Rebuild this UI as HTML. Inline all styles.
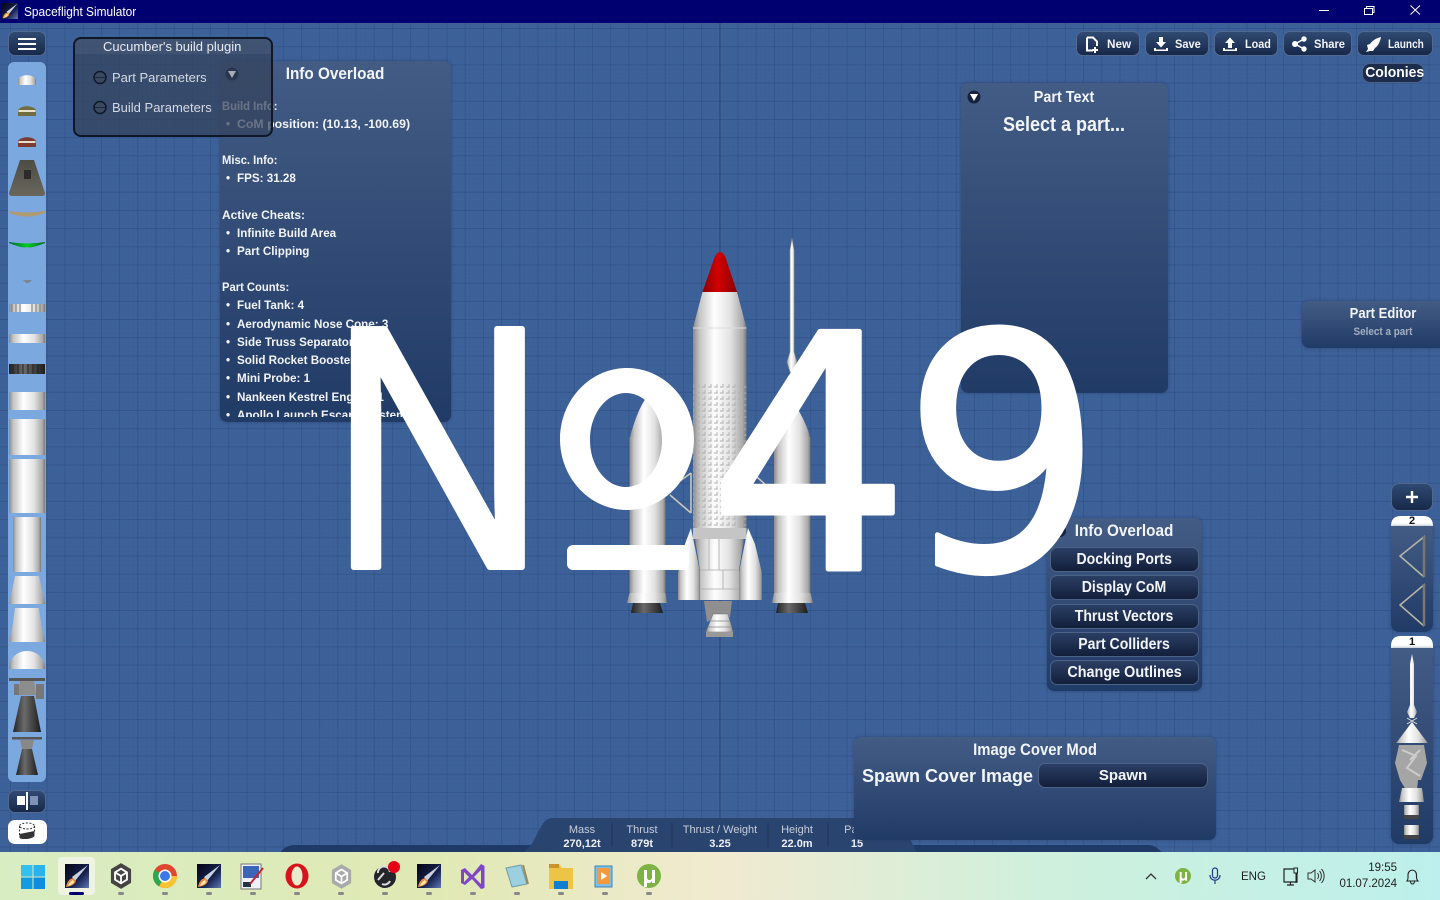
<!DOCTYPE html>
<html><head><meta charset="utf-8"><title>Spaceflight Simulator</title>
<style>
html,body{margin:0;padding:0;width:1440px;height:900px;overflow:hidden;background:#3d6199}
body{position:relative;font-family:"Liberation Sans",sans-serif;color:#fff}
#bg{position:absolute;left:0;top:23px;width:1440px;height:830px;background-color:#3d6199;
background-image:
linear-gradient(90deg,rgba(35,65,115,.32) 1px,transparent 1px),
linear-gradient(0deg,rgba(35,65,115,.32) 1px,transparent 1px),
linear-gradient(90deg,rgba(50,80,130,.08) 1px,transparent 1px),
linear-gradient(0deg,rgba(50,80,130,.08) 1px,transparent 1px);
background-size:18.2px 18.2px,18.2px 18.2px,4.55px 4.55px,4.55px 4.55px;background-position:10px 6px,0 6px,10px 6px,0 6px}
svg.l{position:absolute;left:0;top:0;width:1440px;height:900px}
.p{position:absolute;background:linear-gradient(#425c85,#213b67);border-radius:7px;box-shadow:0 0 3px rgba(30,50,90,.5)}
.t{position:absolute;white-space:nowrap;font-weight:700;color:#f2f4f8;line-height:18px}
.c{transform:translateX(-50%)}
.n{transform:translateX(-50%) scaleX(.9)}
.b{position:absolute;box-sizing:border-box;border:1px solid #51698f;border-radius:7px;background:linear-gradient(#304a72,#17294a)}
.d{position:absolute;box-sizing:border-box;border:1px solid #4d6287;border-radius:7px;background:linear-gradient(#2b3f65,#121f3b);text-align:center;font-weight:700;color:#f2f4f8}
.d span{display:inline-block;transform:scaleX(.88);white-space:nowrap}
.g{position:absolute;white-space:nowrap;font-size:11px;transform:translateX(-50%);line-height:14px;text-align:center}
.i{font-size:12.200px}
.i .t{transform-origin:0 50%;transform:scaleX(.955)}
.i .h{transform:scaleX(.92)}
</style></head><body>
<svg width="0" height="0" style="position:absolute"><defs>
<linearGradient id="cy"><stop offset="0" stop-color="#8a8a8a"/><stop offset=".12" stop-color="#c4c4c4"/><stop offset=".4" stop-color="#fff"/><stop offset=".7" stop-color="#e2e2e2"/><stop offset=".93" stop-color="#a8a8a8"/><stop offset="1" stop-color="#777"/></linearGradient>
<linearGradient id="dk"><stop offset="0" stop-color="#222"/><stop offset=".4" stop-color="#6a6a6a"/><stop offset="1" stop-color="#1d1d1d"/></linearGradient>
<linearGradient id="red"><stop offset="0" stop-color="#8d0000"/><stop offset=".45" stop-color="#d20000"/><stop offset="1" stop-color="#8a0000"/></linearGradient>
<linearGradient id="cap" x1="0" x2="0" y1="0" y2="1"><stop offset="0" stop-color="#4d4c44"/><stop offset="1" stop-color="#69675c"/></linearGradient>
<linearGradient id="grn"><stop offset="0" stop-color="#063"/><stop offset=".5" stop-color="#0c2"/><stop offset="1" stop-color="#063"/></linearGradient>
<linearGradient id="ic" x1="0" x2="1" y1="0" y2="1"><stop offset="0" stop-color="#050515"/><stop offset=".6" stop-color="#16224f"/><stop offset="1" stop-color="#5f78b5"/></linearGradient>
<linearGradient id="tb"><stop offset="0" stop-color="#d8edc2"/><stop offset=".3" stop-color="#e0e9b4"/><stop offset=".5" stop-color="#f1ead0"/><stop offset=".72" stop-color="#cff0dc"/><stop offset="1" stop-color="#bdf0ec"/></linearGradient>
<pattern id="mesh" width="6" height="6" patternUnits="userSpaceOnUse"><path d="M0 3H6M3 0V6" stroke="#b0b0b0" stroke-width=".9" stroke-dasharray="3.6 2.400"/></pattern>
<clipPath id="nclip"><rect x="300" y="300" width="232" height="300"/></clipPath>
<symbol id="roc" viewBox="0 0 24 24"><rect width="24" height="24" fill="url(#ic)"/><path d="M23 1 7 13l3 4L23 1Z" fill="#c9d2de"/><path d="M1 23c1-5 3-8 7-9l3 3c-1 3-4 5-10 6Z" fill="#f08a3c"/><path d="M3 22c1-3 3-5 5-6l1 2c-1 2-3 3-6 4Z" fill="#ffe9b0"/></symbol>
<symbol id="hex" viewBox="0 0 24 28"><path d="M12 0 23 6.500V21.500L12 28 1 21.500V6.500Z"/><path d="M12 6 18.500 10V18L12 22 5.500 18V10Z" fill="none" stroke="#fff" stroke-width="2"/><path d="M12 14V22M12 14 5.500 10M12 14 18.500 10" stroke="#fff" stroke-width="2"/></symbol>
<symbol id="ut" viewBox="0 0 24 24"><circle cx="12" cy="12" r="12" fill="#7cb342"/><path d="M7 6h3v7c0 2 1 3 2.500 3s2.500-1 2.500-3V6h3v13h-3v-2c-1 1.500-2 2-3.500 2-.7 0-1.200-.2-1.500-.5V23H7Z" fill="#fff"/></symbol>
</defs></svg>

<div id="bg"></div>

<svg class="l">
<path d="M720 23V852" stroke="#2f4d80" stroke-width="1.300"/>
<g stroke="#c8c8b8" stroke-width="1.600" fill="none"><path d="M670 495 691 513M691 473V513M691 473 680 481M757 477 768 487"/></g>
<path d="M647 397C640 405 633 425 630 437H665C662 425 654 405 647 397Z" fill="url(#cy)"/>
<rect x="629.500" y="437" width="36" height="157" fill="url(#cy)"/>
<path d="M629.500 593 627 603H667L665.500 593Z" fill="url(#cy)"/>
<path d="M633 603H660L663 613H631Z" fill="url(#dk)"/>
<path d="M792 400C785 410 778 425 775 437H810C807 425 799 410 792 400Z" fill="url(#cy)"/>
<rect x="774" y="437" width="36.500" height="157" fill="url(#cy)"/>
<path d="M774 593 772 603H813L810.500 593Z" fill="url(#cy)"/>
<path d="M778 603H805L808 613H776Z" fill="url(#dk)"/>
<path d="M792 238 790 250V352L787 362 790 372H794L797 362 794 352V250Z" fill="url(#cy)" stroke="#8a8a8a" stroke-width=".6"/>
<path d="M720 252C717 252 715 256 714 259L702.500 292H737L726 259C725 256 723 252 720 252Z" fill="url(#red)"/>
<path d="M702.500 292H737L746.500 328H693Z" fill="url(#cy)"/>
<rect x="693" y="328" width="53.500" height="200" fill="url(#cy)"/>
<path d="M693 328H746.500" stroke="#ddd" stroke-width="1"/>
<rect x="693" y="383" width="53.500" height="146" fill="url(#mesh)"/>
<rect x="693" y="528" width="53.500" height="11" fill="#c5c5c5"/>
<path d="M695 539H744L739 570V600H700V570Z" fill="url(#cy)"/>
<path d="M701 570H739M701 589H739M709 539V570M719 539V570M723 570V589" stroke="#aaa" stroke-width=".8" fill="none"/>
<path d="M691 528 700 572V600H678V573L685 544Z" fill="url(#cy)"/>
<path d="M748 528 739 572V600H762V573L755 544Z" fill="url(#cy)"/>
<path d="M704 601H732L730 617H716L707 622Z" fill="#8f8f8f"/>
<path d="M713 614H728L733 632H706Z" fill="url(#cy)" stroke="#777" stroke-width=".6"/>
<path d="M711 621H730M708 627H732" stroke="#888" stroke-width=".8"/>
<rect x="706" y="632" width="27" height="5" fill="#999"/>

<rect x="8" y="62" width="38" height="720" rx="6" fill="#7ba8df"/>
<path d="M18 85V79C21 74 33 74 36 79V85Z" fill="url(#cy)"/>
<path d="M18 116V110C21 105 33 105 36 110V116Z" fill="#716d3f"/><rect x="18.500" y="110" width="17" height="2" fill="#e7e4d0"/>
<path d="M18 147V141C21 136 33 136 36 141V147Z" fill="#7c3c30"/><rect x="18.500" y="141" width="17" height="2" fill="#e9dcd2"/>
<path d="M20 160H34L45 193Q45 196 42 196H12Q9 196 9 193Z" fill="url(#cap)"/><rect x="24" y="170" width="7" height="9" fill="#2b2b2b"/>
<path d="M9 211Q27 214 45 211V213Q30 218 27 216 24 218 9 213Z" fill="#b09a70"/>
<path d="M9 242Q27 245 45 242V243Q30 249 27 247 24 249 9 243Z" fill="url(#grn)"/>
<path d="M23 280H32L29 283H26Z" fill="#7b8590"/>
<rect x="9" y="304" width="36" height="8" fill="url(#cy)"/><path d="M12 304V312M16 304V312M20 304V312M32 304V312M36 304V312M40 304V312" stroke="#777" stroke-width="1"/>
<rect x="9" y="334" width="36" height="9" fill="url(#cy)"/>
<rect x="9" y="364" width="36" height="10" fill="url(#dk)"/><path d="M13 364V374M18 364V374M23 364V374M28 364V374M33 364V374M38 364V374" stroke="#222" stroke-width="1"/>
<rect x="9" y="392" width="36" height="18" fill="url(#cy)"/>
<rect x="9" y="419" width="36" height="36" fill="url(#cy)"/>
<rect x="9" y="459" width="36" height="54" fill="url(#cy)"/>
<rect x="13" y="517" width="28" height="55" fill="url(#cy)"/>
<path d="M15 576H39L42 590 45 604H9L12 590Z" fill="url(#cy)"/>
<path d="M15 608H39L41 623 45 642H9L13 623Z" fill="url(#cy)"/>
<path d="M9 669C9 657 18 651 27 651 36 651 45 657 45 669Z" fill="url(#cy)"/>
<rect x="9" y="678" width="36" height="3" fill="#555"/>
<path d="M20 681H34L36 695H18Z" fill="#8d8d8d"/><path d="M14 684H19V695H14ZM36 684H44V699H36Z" fill="#777"/>
<path d="M21 696H34L41 732H13Z" fill="url(#dk)"/>
<rect x="12" y="737" width="30" height="2.500" fill="#555"/><path d="M20 740H34L32 749H22Z" fill="#888"/>
<path d="M22 749H32L38 775H16Z" fill="url(#dk)"/>

<path d="M1391 526Q1391 516 1401 516H1423Q1433 516 1433 526V532H1391Z" fill="#fff"/>
<path d="M1391 646Q1391 636 1401 636H1423Q1433 636 1433 646V650H1391Z" fill="#fff"/>
</svg>

<div class="b" style="left:8px;top:31px;width:38px;height:25px"></div>
<svg class="l"><path d="M18 39H36M18 44H36M18 49H36" stroke="#fff" stroke-width="2"/></svg>
<div class="b" style="left:8px;top:790px;width:38px;height:23px"></div>
<svg class="l"><rect x="17" y="796" width="8" height="9" fill="#fff"/><rect x="30" y="796" width="8" height="9" fill="#7d92b4"/><path d="M27 792V810" stroke="#fff" stroke-width="2"/></svg>
<div style="position:absolute;left:8px;top:820px;width:39px;height:24px;background:#fff;border-radius:7px"></div>
<svg class="l"><ellipse cx="27" cy="826" rx="7.500" ry="3" fill="none" stroke="#333" stroke-dasharray="2 1.500"/><path d="M19.500 826V836M34.500 826V833" stroke="#333" stroke-dasharray="2 1.500" fill="none"/><path d="M19.500 834 34.500 831V836C33 839 22 840 19.500 838Z" fill="#333"/></svg>

<div class="p" style="left:220px;top:61px;width:231px;height:361px;overflow:hidden"></div>
<div class="t n" style="left:335px;top:64px;font-size:17px;line-height:19px">Info Overload</div>
<div class="i" style="position:absolute;left:220px;top:61px;width:231px;height:356px;overflow:hidden">
<div class="t h" style="left:2px;top:36px">Build Info:</div>
<div class="t" style="left:6px;top:54px">•</div><div class="t" style="left:17px;top:54px;transform:scaleX(1.01)">CoM position: (10.13, -100.69)</div>
<div class="t h" style="left:2px;top:90px">Misc. Info:</div>
<div class="t" style="left:6px;top:108px">•</div><div class="t" style="left:17px;top:108px">FPS: 31.28</div>
<div class="t h" style="left:2px;top:145px;transform:scaleX(.98)">Active Cheats:</div>
<div class="t" style="left:6px;top:163px">•</div><div class="t" style="left:17px;top:163px">Infinite Build Area</div>
<div class="t" style="left:6px;top:181px">•</div><div class="t" style="left:17px;top:181px">Part Clipping</div>
<div class="t h" style="left:2px;top:217px">Part Counts:</div>
<div class="t" style="left:6px;top:235px">•</div><div class="t" style="left:17px;top:235px">Fuel Tank: 4</div>
<div class="t" style="left:6px;top:254px">•</div><div class="t" style="left:17px;top:254px">Aerodynamic Nose Cone: 3</div>
<div class="t" style="left:6px;top:272px">•</div><div class="t" style="left:17px;top:272px">Side Truss Separator: 2</div>
<div class="t" style="left:6px;top:290px">•</div><div class="t" style="left:17px;top:290px">Solid Rocket Booster: 2</div>
<div class="t" style="left:6px;top:308px">•</div><div class="t" style="left:17px;top:308px">Mini Probe: 1</div>
<div class="t" style="left:6px;top:327px">•</div><div class="t" style="left:17px;top:327px">Nankeen Kestrel Engine: 1</div>
<div class="t" style="left:6px;top:345px">•</div><div class="t" style="left:17px;top:345px">Apollo Launch Escape System: 1</div>
</div>

<div style="position:absolute;left:73px;top:37px;width:196px;height:96px;border:2px solid #101827;border-radius:8px;background:rgba(52,66,92,.72)"></div>
<div style="position:absolute;left:75px;top:39px;width:196px;height:15px;background:rgba(120,130,150,.16);border-radius:6px 6px 0 0"></div>
<div style="position:absolute;left:103px;top:39px;font-size:13px;color:#e8ebf0;line-height:15px;white-space:nowrap">Cucumber's build plugin</div>
<div style="position:absolute;left:112px;top:70px;font-size:13px;color:#d5dae2;line-height:15px;white-space:nowrap">Part Parameters</div>
<div style="position:absolute;left:112px;top:100px;font-size:13px;color:#d5dae2;line-height:15px;white-space:nowrap">Build Parameters</div>
<svg class="l"><g stroke="#0f1728" stroke-width="1.500"><circle cx="100" cy="77.500" r="6" fill="#3b4a62"/><circle cx="100" cy="107.500" r="6" fill="#3b4a62"/></g><path d="M95 77.500H105M95 107.500H105" stroke="#1e283b"/>
<circle cx="232" cy="74" r="6.500" fill="#25324a" opacity=".8"/><path d="M228 71H236L232 78Z" fill="#a8aeb9"/></svg>

<div class="b" style="left:1076px;top:31px;width:64px;height:25px"></div>
<div class="b" style="left:1145px;top:31px;width:64px;height:25px"></div>
<div class="b" style="left:1214px;top:31px;width:64px;height:25px"></div>
<div class="b" style="left:1283px;top:31px;width:69px;height:25px"></div>
<div class="b" style="left:1357px;top:31px;width:76px;height:25px"></div>
<div class="t" style="left:1107px;top:35px;font-size:12px;transform-origin:0 50%;transform:scaleX(.98)">New</div>
<div class="t" style="left:1175px;top:35px;font-size:12px;transform-origin:0 50%;transform:scaleX(.92)">Save</div>
<div class="t" style="left:1245px;top:35px;font-size:12px;transform-origin:0 50%;transform:scaleX(.9)">Load</div>
<div class="t" style="left:1314px;top:35px;font-size:12px;transform-origin:0 50%;transform:scaleX(.93)">Share</div>
<div class="t" style="left:1388px;top:35px;font-size:12px;transform-origin:0 50%;transform:scaleX(.84)">Launch</div>
<svg class="l" fill="#fff">
<path d="M1087 37.500H1093L1097 41.500V46M1093 50.500H1087V37.500" fill="none" stroke="#fff" stroke-width="2"/><path d="M1094 47H1096V49H1098V51H1096V53H1094V51H1092V49H1094Z"/>
<path d="M1159 37H1163V42H1166L1161 47.500 1156 42H1159ZM1154 48H1156V49.500H1166V48H1168V51H1154Z"/>
<path d="M1228 48V43H1225L1230 37.500 1235 43H1232V48ZM1223 48H1225V49.500H1235V48H1237V51H1223Z"/>
<circle cx="1295" cy="44" r="3"/><circle cx="1304" cy="39" r="2.700"/><circle cx="1304" cy="49" r="2.700"/><path d="M1295 44 1304 39M1295 44 1304 49" stroke="#fff" stroke-width="1.500"/>
<path d="M1381 37C1376 38 1372 41 1370 44L1367 45 1368 49 1366 52 1370 51 1373 51 1375 48C1378 46 1380 42 1381 37Z"/>
</svg>
<div style="position:absolute;box-sizing:border-box;left:1362px;top:63px;width:62px;height:20px;border-radius:8px;background:#1c2c4c;border:1px solid #4a6288;font-weight:700;font-size:15px;line-height:18px;text-align:center;color:#fff"><span style="display:inline-block;transform:scaleX(.93);white-space:nowrap">Colonies</span></div>

<div class="p" style="left:961px;top:83px;width:207px;height:310px"></div>
<svg class="l"><circle cx="974" cy="97" r="6.500" fill="#15233f"/><path d="M970 94H978L974 101Z" fill="#fff"/></svg>
<div class="t n" style="left:1064px;top:89px;font-size:16px">Part Text</div>
<div class="t n" style="left:1064px;top:115px;font-size:20px;line-height:21px">Select a part...</div>

<div class="p" style="left:1302px;top:301px;width:150px;height:47px"></div>
<div class="t n" style="left:1383px;top:305px;font-size:14.500px">Part Editor</div>
<div class="t n" style="left:1383px;top:323px;font-size:11px;color:#a5afc2">Select a part</div>

<div class="p" style="left:1047px;top:518px;width:155px;height:173px"></div>
<svg class="l"><circle cx="1060" cy="531" r="6" fill="#15233f"/></svg>
<div class="t n" style="left:1124px;top:521px;font-size:17px;line-height:19px">Info Overload</div>
<div class="d" style="left:1050px;top:547px;width:149px;height:25px;font-size:16px;line-height:23px"><span>Docking Ports</span></div>
<div class="d" style="left:1050px;top:575px;width:149px;height:25px;font-size:16px;line-height:23px"><span>Display CoM</span></div>
<div class="d" style="left:1050px;top:604px;width:149px;height:25px;font-size:16px;line-height:23px"><span>Thrust Vectors</span></div>
<div class="d" style="left:1050px;top:632px;width:149px;height:25px;font-size:16px;line-height:23px"><span>Part Colliders</span></div>
<div class="d" style="left:1050px;top:660px;width:149px;height:25px;font-size:16px;line-height:24px"><span style="transform:scaleX(.9)">Change Outlines</span></div>

<svg class="l">
<path d="M280 853Q285 845 295 845H1148Q1156 845 1162 853Z" fill="#1f3a66"/>
<path d="M522 853C538 845 538 818 553 818H900L917 853Z" fill="#2a4470"/>
<path d="M612 823V847M672 823V847M768 823V847M828 823V847" stroke="#1f3458"/>
</svg>
<div class="g" style="left:582px;top:823px;color:#c6cdda">Mass</div><div class="g" style="left:582px;top:837px;font-weight:700;color:#eef1f6">270,12t</div>
<div class="g" style="left:642px;top:823px;color:#c6cdda">Thrust</div><div class="g" style="left:642px;top:837px;font-weight:700;color:#eef1f6">879t</div>
<div class="g" style="left:720px;top:823px;color:#c6cdda">Thrust / Weight</div><div class="g" style="left:720px;top:837px;font-weight:700;color:#eef1f6">3.25</div>
<div class="g" style="left:797px;top:823px;color:#c6cdda">Height</div><div class="g" style="left:797px;top:837px;font-weight:700;color:#eef1f6">22.0m</div>
<div class="g" style="left:857px;top:823px;color:#c6cdda">Parts</div><div class="g" style="left:857px;top:837px;font-weight:700;color:#eef1f6">15</div>

<div class="p" style="left:854px;top:737px;width:362px;height:103px"></div>
<div class="t n" style="left:1035px;top:741px;font-size:16.500px">Image Cover Mod</div>
<div class="t" style="left:862px;top:766px;font-size:18px;line-height:20px">Spawn Cover Image</div>
<div class="d" style="left:1038px;top:763px;width:170px;height:25px;font-size:15px;line-height:23px"><span style="transform:none">Spawn</span></div>

<div class="b" style="left:1391px;top:483px;width:42px;height:28px;border-radius:8px"></div>
<div class="p" style="left:1391px;top:526px;width:42px;height:106px;border-radius:0 0 8px 8px"></div>
<div class="p" style="left:1391px;top:648px;width:42px;height:196px;border-radius:0 0 8px 8px"></div>
<div class="t c" style="left:1412px;top:515px;font-size:11px;color:#111;line-height:12px">2</div>
<div class="t c" style="left:1412px;top:636px;font-size:11px;color:#111;line-height:12px">1</div>
<svg class="l">
<path d="M1406 497H1418M1412 491V503" stroke="#fff" stroke-width="2.400"/>
<g fill="none" stroke="#b8b8aa" stroke-width="1.500"><path d="M1425 536 1400 556 1424 577M1425 584 1400 605 1424 626"/></g>
<path d="M1424 536V577M1424 584V626" stroke="#777" stroke-width="2.500"/>
<path d="M1412 654 1410 664V705L1407 712 1410 718H1414L1417 712 1414 705V664Z" fill="url(#cy)"/>
<path d="M1407 718 1417 724M1417 718 1407 724" stroke="#ddd"/>
<path d="M1412 722 1427 742 1428 743H1396L1397 742Z" fill="url(#cy)"/>
<path d="M1399 745H1424L1427 763 1421 780H1418L1417 790H1406L1400 780 1395 763Z" fill="#a5a5a5"/>
<path d="M1402 750 1416 756 1407 768 1420 776M1420 750 1410 760" stroke="#ccc" stroke-width="2" fill="none"/>
<path d="M1402 788H1422L1424 802H1399Z" fill="url(#cy)"/>
<rect x="1404" y="805" width="15" height="10" fill="url(#cy)"/><rect x="1404" y="815" width="15" height="4" fill="#444"/>
<rect x="1404" y="825" width="15" height="10" fill="url(#cy)"/><rect x="1404" y="835" width="15" height="4" fill="#444"/>
</svg>

<div style="position:absolute;left:0;top:0;width:1440px;height:23px;background:#000070"></div>
<div style="position:absolute;left:24px;top:5px;font-size:12.500px;line-height:15px;color:#fff;white-space:nowrap;transform-origin:0 50%;transform:scaleX(.95)">Spaceflight Simulator</div>
<svg class="l">
<use href="#roc" x="2" y="3" width="16" height="16"/>
<path d="M1319 10.500H1329" stroke="#fff"/>
<path d="M1364.500 8.500H1372.500V14.500H1364.500ZM1366.500 8.500V6.500H1374V12.500H1372.500" fill="none" stroke="#fff"/>
<path d="M1410.500 5.500 1420 14.500M1420 5.500 1410.500 14.500" stroke="#fff"/>
</svg>

<svg class="l">
<rect x="0" y="852" width="1440" height="48" fill="url(#tb)"/>
<rect x="58" y="857" width="37" height="38" rx="4" fill="#f2f5e6" opacity=".85"/>
<rect x="69" y="892" width="15" height="3" rx="1.500" fill="#00006e"/>
<g fill="#888"><rect x="118" y="892" width="6" height="3" rx="1.500"/><rect x="162" y="892" width="6" height="3" rx="1.500"/><rect x="206" y="892" width="6" height="3" rx="1.500"/><rect x="250" y="892" width="6" height="3" rx="1.500"/><rect x="294" y="892" width="6" height="3" rx="1.500"/><rect x="338" y="892" width="6" height="3" rx="1.500"/><rect x="382" y="892" width="6" height="3" rx="1.500"/><rect x="426" y="892" width="6" height="3" rx="1.500"/><rect x="470" y="892" width="6" height="3" rx="1.500"/><rect x="514" y="892" width="6" height="3" rx="1.500"/><rect x="558" y="892" width="6" height="3" rx="1.500"/><rect x="602" y="892" width="6" height="3" rx="1.500"/><rect x="646" y="892" width="6" height="3" rx="1.500"/></g>
<rect x="21" y="865" width="11.500" height="11.500" fill="#33bff0"/><rect x="33.500" y="865" width="11.500" height="11.500" fill="#29b2ee"/><rect x="21" y="877.500" width="11.500" height="11.500" fill="#119be4"/><rect x="33.500" y="877.500" width="11.500" height="11.500" fill="#0f8de0"/>
<use href="#roc" x="65" y="864" width="24" height="24"/>
<use href="#hex" x="110" y="863" width="22" height="26" fill="#444"/>
<circle cx="165" cy="876" r="12" fill="#e0452f"/><path d="M165 876 154.600 870A12 12 0 0 0 159 886.400Z" fill="#2ea84f"/><path d="M165 876 159 886.400A12 12 0 0 0 177 876Z" fill="#f7c52e"/><circle cx="165" cy="876" r="6.500" fill="#fff"/><circle cx="165" cy="876" r="5" fill="#3b78e7"/>
<use href="#roc" x="197" y="864" width="24" height="24"/>
<rect x="241" y="864" width="20" height="25" fill="#eef2f8" stroke="#777"/><path d="M243 866H259V878H243Z" fill="#3b66b8"/><rect x="243" y="882" width="8" height="5" fill="#234"/><path d="M250 884 263 868" stroke="#c8242c" stroke-width="2"/>
<ellipse cx="297" cy="876" rx="11.500" ry="12.500" fill="#d8131e"/><ellipse cx="297" cy="876" rx="5.500" ry="9.500" fill="#e8eccb"/>
<use href="#hex" x="331" y="864" width="21" height="25" fill="#aaa"/>
<circle cx="385" cy="877" r="11" fill="#24242b"/><path d="M378 873A6 6 0 0 1 390 872M390 881A6 6 0 0 1 382 884M378 880 384 873" fill="none" stroke="#ddd" stroke-width="2"/><circle cx="394" cy="867" r="6" fill="#e60013"/>
<use href="#roc" x="417" y="864" width="24" height="24"/>
<path d="M461 870 465 868 472 875 481 864 484.500 866V888L481 889 472 879 465 885 461 883ZM464 872V882L469 877ZM481 870 474 877 481 884Z" fill="#7d47c8" fill-rule="evenodd"/>
<path d="M506 868 521 865 527 884 512 887Z" fill="#9cd0e0" stroke="#6d9ba5"/><path d="M523 865 528 884" stroke="#9a8a5c" stroke-width="2"/>
<path d="M549 864H559L562 868H573V889H549Z" fill="#eec446"/><rect x="549" y="864" width="10" height="4" fill="#c8932a"/><rect x="554" y="881" width="14" height="8" fill="#0f7fd0"/>
<rect x="595" y="866" width="17" height="21" fill="#7dc0e8" stroke="#3f86b4"/><rect x="597" y="868" width="13" height="16" fill="#f39a3c"/><path d="M601 872 607 876 601 880Z" fill="#fff"/>
<use href="#ut" x="637" y="864" width="24" height="24"/>
<path d="M1146 879 1151 874 1156 879" fill="none" stroke="#333" stroke-width="1.300"/>
<use href="#ut" x="1175" y="868" width="16" height="16"/>
<rect x="1212.500" y="868" width="5" height="10" rx="2.500" fill="none" stroke="#223a88" stroke-width="1.200"/><path d="M1210 875C1210 882 1220 882 1220 875M1215 880V884" fill="none" stroke="#223a88" stroke-width="1.200"/>
<path d="M1297 869H1284V882H1297ZM1287 885H1294M1290.500 882V885" fill="none" stroke="#222" stroke-width="1.200"/><rect x="1294" y="868" width="3.500" height="5" fill="#c4f0ea" stroke="#222"/><path d="M1296 873V883" stroke="#222"/>
<path d="M1308 873H1311L1315 870V882L1311 879H1308ZM1317.500 873C1319 875 1319 877 1317.500 879M1319.500 871C1322 874 1322 878 1319.500 881M1321.500 869C1325 873 1325 879 1321.500 883" fill="none" stroke="#333"/>
<path d="M1407 881C1408.500 879 1408 877 1408 875 1408 868.500 1416.500 868.500 1416.500 875 1416.500 877 1416 879 1418 881ZM1410.500 881C1410.500 885 1414.500 885 1414.500 881" fill="none" stroke="#222" stroke-width="1.100"/>
</svg>
<div style="position:absolute;left:1241px;top:870px;font-size:11.500px;line-height:14px;color:#222">ENG</div>
<div style="position:absolute;right:43px;top:861px;font-size:11.500px;line-height:14px;color:#222">19:55</div>
<div style="position:absolute;right:43px;top:877px;font-size:11.500px;line-height:14px;color:#222">01.07.2024</div>

<svg class="l" style="pointer-events:none">
<g clip-path="url(#nclip)"><text transform="translate(324.400 567) scale(.92 1)" font-family="Liberation Sans, sans-serif" font-size="346" fill="#fff" stroke="#fff" stroke-width="6" stroke-linejoin="round">№</text></g>
<path fill="#fff" fill-rule="evenodd" d="M627 368C590 368 560 400 560 439 560 478 590 510 627 510 664 510 694 478 694 439 694 400 664 368 627 368ZM626 393C646 393 662 414 662 440 662 466 646 487 626 487 606 487 590 466 590 440 590 414 606 393 626 393Z"/>
<rect x="567" y="545" width="122" height="25" rx="6" fill="#fff"/>
<g font-family="DejaVu Sans, sans-serif" font-size="326" fill="#fff" stroke="#fff" stroke-width="5" stroke-linejoin="round">
<text transform="translate(708 569) scale(.975 1)">4</text>
<text transform="translate(903 569) scale(.96 1)">9</text>
</g>
</svg>
</body></html>
